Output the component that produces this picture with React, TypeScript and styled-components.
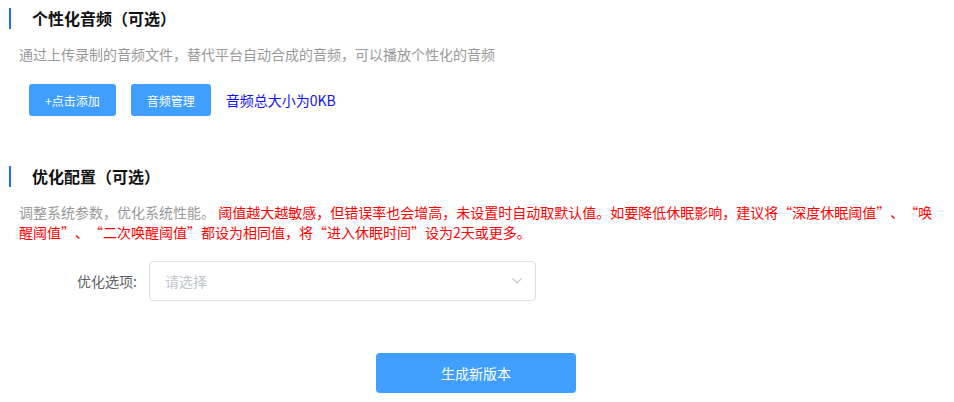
import React from "react";
import styled, { createGlobalStyle } from "styled-components";

const GlobalStyle = createGlobalStyle`
  html, body {
    margin: 0;
    padding: 0;
    background: #ffffff;
    font-family: "Noto Sans CJK SC", "Noto Sans", sans-serif;
  }
  * { box-sizing: border-box; }
`;

const Page = styled.div`
  width: 954px;
  padding: 8px 14px 0 9px;
`;

const Section = styled.section<{ $gap?: number }>`
  margin-top: ${(p) => p.$gap ?? 0}px;
`;

const Header = styled.div`
  display: flex;
  align-items: center;
  height: 21px;
  border-left: 2px solid #1f6fff;
  padding-left: 21px;
`;

const Title = styled.h2`
  margin: 0;
  font-size: 16px;
  line-height: 21px;
  font-weight: 700;
  color: #111111;
`;

const Desc = styled.p`
  margin: 15px 0 0 10px;
  font-size: 14px;
  line-height: 20px;
  color: #999999;
`;

const Warn = styled.span`
  color: #ff0000;
`;

/* full-width quotation mark: occupies one CJK cell */
const Quote = styled.span<{ $close?: boolean }>`
  display: inline-block;
  width: 14px;
  text-align: ${(p) => (p.$close ? "left" : "right")};
`;

const ButtonRow = styled.div`
  display: flex;
  align-items: center;
  gap: 15px;
  margin: 20px 0 0 20px;
`;

const SmallButton = styled.button`
  height: 32px;
  padding: 0 16px;
  border: none;
  border-radius: 3px;
  background: #409eff;
  color: #ffffff;
  font-family: inherit;
  font-size: 12px;
  cursor: pointer;
`;

const SizeText = styled.span`
  font-size: 14px;
  color: #1010ff;
`;

const FormRow = styled.div`
  display: flex;
  align-items: center;
  margin-top: 19px;
`;

const Label = styled.label`
  width: 140px;
  padding-right: 12px;
  text-align: right;
  font-size: 14px;
  color: #606266;
`;

const Select = styled.div`
  width: 387px;
  height: 40px;
  border: 1px solid #dcdfe6;
  border-radius: 4px;
  display: flex;
  align-items: center;
  justify-content: space-between;
  padding: 0 12px 0 15px;
`;

const Placeholder = styled.span`
  font-size: 14px;
  color: #c0c4cc;
`;

const Footer = styled.div`
  display: flex;
  justify-content: center;
  margin: 52px 0 0 3px;
`;

const PrimaryButton = styled.button`
  width: 200px;
  height: 40px;
  border: none;
  border-radius: 4px;
  background: #409eff;
  color: #ffffff;
  font-family: inherit;
  font-size: 14px;
  cursor: pointer;
`;

const Chevron = () => (
  <svg width="12" height="8" viewBox="0 0 12 8" fill="none">
    <path d="M1.5 1.5 L6 6 L10.5 1.5" stroke="#c0c4cc" strokeWidth="1.1" />
  </svg>
);

const Q = ({ children }: { children: string }) => (
  <>
    <Quote>“</Quote>
    {children}
    <Quote $close>”</Quote>
  </>
);

export default function App() {
  return (
    <>
      <GlobalStyle />
      <Page>
        <Section>
          <Header>
            <Title>个性化音频（可选）</Title>
          </Header>
          <Desc>通过上传录制的音频文件，替代平台自动合成的音频，可以播放个性化的音频</Desc>
          <ButtonRow>
            <SmallButton>+点击添加</SmallButton>
            <SmallButton>音频管理</SmallButton>
            <SizeText>音频总大小为0KB</SizeText>
          </ButtonRow>
        </Section>
        <Section $gap={50}>
          <Header>
            <Title>优化配置（可选）</Title>
          </Header>
          <Desc>
            调整系统参数，优化系统性能。{" "}
            <Warn>
              阈值越大越敏感，但错误率也会增高，未设置时自动取默认值。如要降低休眠影响，建议将
              <Q>深度休眠阈值</Q>、<Q>唤醒阈值</Q>、<Q>二次唤醒阈值</Q>都设为相同值，将
              <Q>进入休眠时间</Q>设为2天或更多。
            </Warn>
          </Desc>
          <FormRow>
            <Label>优化选项:</Label>
            <Select>
              <Placeholder>请选择</Placeholder>
              <Chevron />
            </Select>
          </FormRow>
        </Section>
        <Footer>
          <PrimaryButton>生成新版本</PrimaryButton>
        </Footer>
      </Page>
    </>
  );
}
